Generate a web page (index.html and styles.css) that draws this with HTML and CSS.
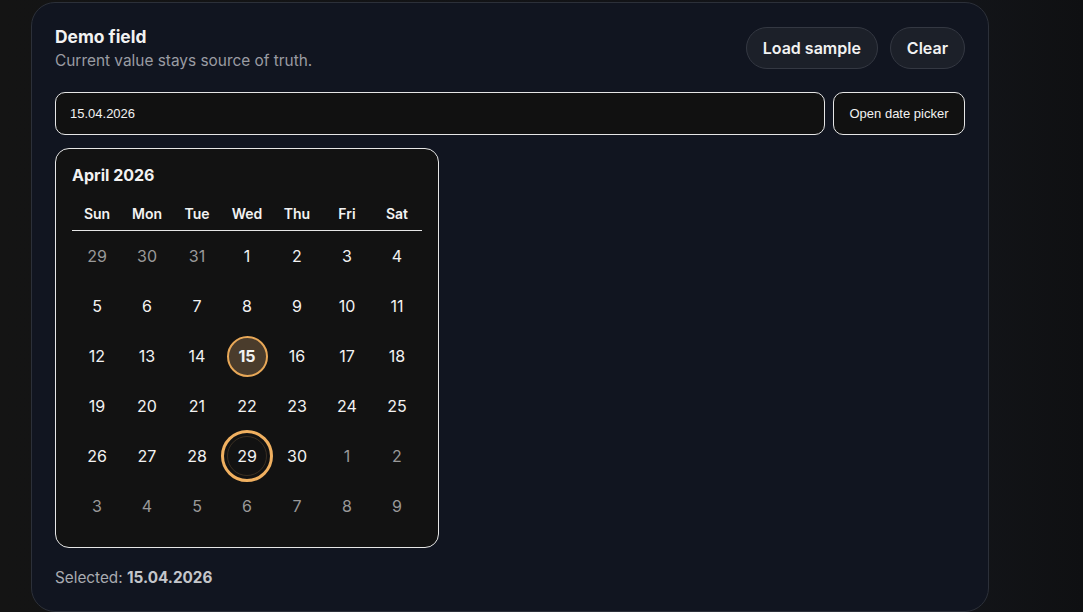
FILE: index.html
```html
<!DOCTYPE html>
<html lang="en">
<head>
    <meta charset="UTF-8">
    <meta name="viewport" content="width=device-width, initial-scale=1.0">
    <title>Date field</title>
    <link rel="stylesheet" href="styles.css">
</head>
<body>
    <div class="page">
        <section class="card">
            <div class="card-head">
                <div>
                    <h2 class="card-title">Demo field</h2>
                    <p class="card-sub">Current value stays source of truth.</p>
                </div>
                <div class="actions">
                    <button class="pill">Load sample</button>
                    <button class="pill">Clear</button>
                </div>
            </div>

            <div class="field-row">
                <input class="date-input" type="text" value="15.04.2026">
                <button class="open-btn">Open date picker</button>
            </div>

            <div class="calendar">
                <div class="cal-title">April 2026</div>
                <div class="cal-grid" id="calGrid"></div>
            </div>

            <p class="selected">Selected: <b>15.04.2026</b></p>
        </section>
    </div>

    <script>
        // build the month grid
        var grid = document.getElementById("calGrid");
        var names = ["Sun", "Mon", "Tue", "Wed", "Thu", "Fri", "Sat"];
        names.forEach(function(n) {
            var h = document.createElement("div");
            h.className = "wd";
            h.textContent = n;
            grid.appendChild(h);
        });

        var days = [];
        [29, 30, 31].forEach(function(d) { days.push({ n: d, out: true }); });
        for (var i = 1; i <= 30; i++) days.push({ n: i });
        for (var j = 1; j <= 9; j++) days.push({ n: j, out: true });

        days.forEach(function(d) {
            var cell = document.createElement("div");
            cell.className = "day";
            var s = document.createElement("span");
            s.textContent = d.n;
            if (d.out) cell.className += " out";
            else if (d.n == 15) s.className = "sel";
            else if (d.n == 29) s.className = "focus";
            cell.appendChild(s);
            grid.appendChild(cell);
        });
    </script>
</body>
</html>
```

FILE: styles.css
```css
* {
    box-sizing: border-box;
}
html, body {
    margin: 0;
    height: 100%;
}
body {
    font-family: Inter, "Noto Sans", sans-serif;
    color: #f2f2f2;
    background: linear-gradient(90deg, #141414 0%, #121317 60%, #14161b 85%, #0f1012 100%);
    overflow: hidden;
}
.page {
    padding: 2px 0 0 31px;
}
.card {
    width: 958px;
    height: 610px;
    background: #111520;
    border: 1px solid #2c3039;
    border-radius: 24px;
    padding: 22px 23px 0 23px;
}
.card-head {
    display: flex;
    justify-content: space-between;
    align-items: flex-start;
}
.card-title {
    margin: 0;
    font-size: 17.4px;
    line-height: 24px;
    font-weight: 700;
}
.card-sub {
    margin: 2px 0 0;
    font-size: 15.4px;
    line-height: 20px;
    color: #9a9ca3;
}
.actions {
    display: flex;
    gap: 12px;
    margin-top: 2px;
}
.pill {
    font-family: Inter, sans-serif;
    font-size: 16px;
    font-weight: 600;
    color: #f2f2f2;
    background: #1c2029;
    border: 1px solid #343842;
    border-radius: 999px;
    height: 42px;
    padding: 0 16px;
}
.field-row {
    display: flex;
    gap: 8px;
    margin-top: 21px;
    height: 43px;
}
.date-input {
    flex: 1;
    background: #111111;
    border: 1px solid #e6e6e6;
    border-radius: 10px;
    color: #f2f2f2;
    font-family: "Liberation Sans", Arial, sans-serif;
    font-size: 13px;
    padding: 0 14px;
    outline: none;
}
.open-btn {
    width: 132px;
    background: #111111;
    border: 1px solid #e6e6e6;
    border-radius: 10px;
    color: #f2f2f2;
    font-family: "Liberation Sans", Arial, sans-serif;
    font-size: 13px;
}
.calendar {
    width: 384px;
    margin-top: 13px;
    background: #121212;
    border: 1px solid #e6e6e6;
    border-radius: 14px;
    padding: 16px 17px 16px 16px;
}
.cal-title {
    font-size: 16px;
    line-height: 20px;
    font-weight: 700;
}
.cal-grid {
    display: grid;
    grid-template-columns: repeat(7, 50px);
    margin-top: 12px;
}
.wd {
    height: 34px;
    line-height: 34px;
    text-align: center;
    font-size: 14px;
    font-weight: 600;
    border-bottom: 1px solid #e6e6e6;
}
.day {
    height: 50px;
    display: flex;
    align-items: center;
    justify-content: center;
    font-size: 16px;
}
.day.out {
    color: #999999;
}
.day span {
    width: 40px;
    height: 40px;
    border-radius: 50%;
    display: flex;
    align-items: center;
    justify-content: center;
}
.day .sel {
    width: 41px;
    height: 41px;
    background: #4a3c2c;
    border: 2px solid #e8a858;
    font-weight: 700;
}
.day .focus {
    border: 1px solid #3a2f22;
    outline: 3px solid #f0b060;
    outline-offset: 3px;
}
.selected {
    margin: 20px 0 0;
    font-size: 15.3px;
    line-height: 20px;
    color: #a9abb1;
}
.selected b {
    color: #c4c6cb;
}
```
